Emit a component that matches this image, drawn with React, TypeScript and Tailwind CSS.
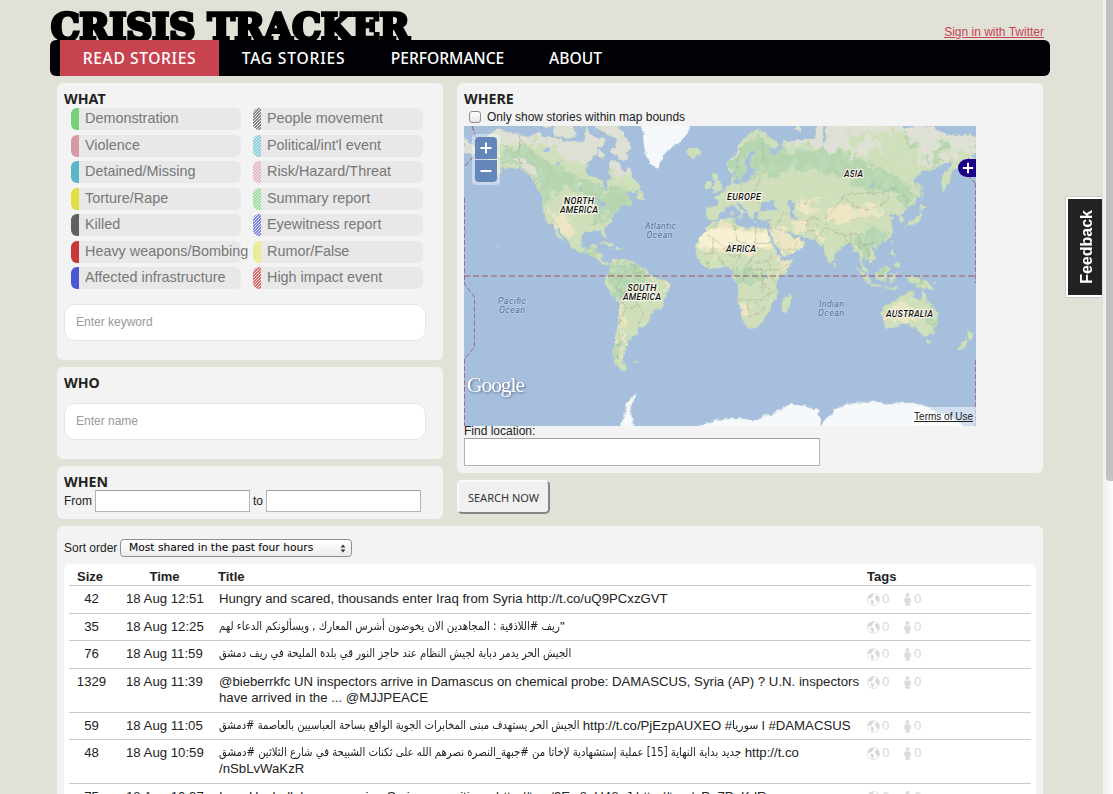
import React from "react";

type Pt = [number, number];

/* Web-mercator projection onto a 512px wide world, equator at y = 149.5 */
const project = ([lon, lat]: Pt): string => {
  const x = ((lon + 180) / 360) * 512;
  const r = (lat * Math.PI) / 180;
  const y = 149.5 - (512 / (2 * Math.PI)) * Math.log(Math.tan(Math.PI / 4 + r / 2));
  return `${x.toFixed(1)},${y.toFixed(1)}`;
};

const shape = (flat: string): string => {
  const n = flat.trim().split(/[\s,]+/).map(Number);
  const pts: Pt[] = [];
  for (let i = 0; i + 1 < n.length; i += 2) pts.push([n[i], n[i + 1]]);
  return "M" + pts.map(project).join("L");
};
const area = (list: string[]): string => list.map((s) => shape(s) + "Z").join("");
const lines = (list: string[]): string => list.map(shape).join("");

const LAND = [
  // North and Central America
  "-168,65.6 -166,68.3 -162,70 -156,71.3 -150,70.6 -141,69.7 -135,69.2 -128,70.3 -124,69.5 -116,69 -108,68 -100,67.8 -95,68.5 -94,71.8 -90,69 -86,69 -81,69 -82,67 -87,66.5 -86,65 -93,62 -94.5,59 -92.5,57 -88,56.7 -82.5,55.2 -82,52.8 -80,51.2 -79,51.5 -79.5,54.6 -77,56 -78,59 -77.5,62.4 -73,62.2 -70,61 -69.5,59 -66,58.8 -64.5,60.2 -62,58 -61,56 -57.5,54.5 -56,52 -59.5,50.2 -66,50.2 -70,47.5 -65,49.2 -64.3,47.5 -61,45.8 -66,43.6 -67,45 -70.3,43.6 -70.7,42 -70,41.7 -74,40.5 -75.7,37 -76,35 -78,33.9 -81.2,31.8 -81.4,30 -80,26.8 -80.6,25.2 -81.8,26.2 -82.8,28 -84,30 -85.5,30 -89.2,30.2 -89.5,29.2 -91.5,29.5 -94.7,29.4 -97.2,27.7 -97.6,24 -97.3,21 -95.8,18.7 -94.3,18.2 -91.5,18.6 -90.4,21 -87,21.5 -87.7,18 -88.6,15.9 -85.8,15.9 -83.2,15 -83.6,11.2 -81.7,9 -79.5,9.5 -77.4,8.6 -78.4,7.9 -80.4,7.4 -82.8,8.1 -83.6,9 -85.7,10 -87.4,12.8 -91.5,14 -94.3,16.2 -96.5,15.7 -101,17.4 -105.3,19.8 -105.4,22 -108.8,25.6 -111.2,28 -113,31.2 -114.8,31.6 -113,28.2 -110,24 -109.5,23 -112,24.7 -114.8,27.5 -115.7,29.8 -117.2,32.8 -118.5,34 -120.6,34.5 -122.5,37.7 -124.3,40.4 -124,44 -124.5,48.2 -122.8,49 -127.5,51 -130.3,54.5 -133.5,57.5 -137,58.7 -140,59.7 -144,60 -148,60.2 -151.5,59.3 -153.5,60.5 -154,58.6 -158,56.5 -163.5,54.8 -161,56 -157.5,58.7 -162,58.8 -164.5,61 -166,61.8 -161,64.3 -166,64.5",
  // Arctic archipelago
  "-117,69.5 -105,68.9 -101,69.8 -105,72.8 -110,73 -117,71.5",
  "-125,72 -120,71.4 -115,73.3 -121,74.3 -125,74",
  "-62,66.5 -66,65 -64.5,63 -68,62.5 -74,64.5 -78,65 -73,67.5 -73,69 -79,70 -88,71.5 -90,73.7 -81,73.7 -75,72.2 -68,70.3",
  "-82,63.5 -86,64 -85,66 -81,64.3", "-100,72 -97,71.5 -96,73.6 -102,73.5", "-116,74.9 -105,75 -106,77 -116,76.5", "-95,74.6 -80,74.6 -80,77 -95,77",
  "-59,47.7 -56,51.5 -53,47 -55.5,46.8", "-84.8,21.9 -80,23.1 -74.3,20.2 -77.6,19.9 -82,22.5", "-74.3,18.4 -72.5,19.9 -68.6,18.6 -71.5,17.8", "-78.2,18.3 -76.3,18.2 -77,17.8", "-128,50.6 -125,50 -123.6,48.5",
  // South America
  "-77.4,8.6 -75.5,10.6 -72,12.2 -71.4,10.9 -68.2,10.9 -62,10.7 -59.8,8.3 -57,6 -51.7,4.4 -50,0.5 -48,-.8 -44,-2.7 -39.5,-3 -35.4,-5.2 -34.9,-8 -38.2,-12.8 -39,-17.5 -41,-22 -45,-23.4 -48.5,-26 -49.4,-29 -52.4,-33.2 -54.8,-34.9 -58,-34 -56.8,-36.5 -57.8,-38.2 -62,-39 -62.3,-40.8 -65,-41 -63.8,-42.7 -65.4,-45 -67.5,-46.2 -65.9,-47.9 -69,-50.5 -68.5,-52.5 -65.2,-54.7 -68.5,-55.5 -73.8,-52 -75.5,-49 -74.2,-44 -73.7,-39.5 -71.7,-33 -71.3,-29 -70.2,-20 -71.6,-17.3 -76.2,-13.7 -79.6,-7.5 -81.3,-5 -80.3,-3.2 -80.6,-.6 -78.8,1.4 -77.2,4",
  "-61,-51.5 -58,-51.4 -59,-52.2",
  // Eurasia
  "-9.3,43 -1.8,43.4 -1.2,46 -4.5,48.2 -1.6,48.8 1.5,50.3 4.5,52.5 8,53.8 8.3,57 10.6,57.7 10,54.5 14,54.1 18.8,54.6 21.2,55.5 21.5,57.4 24.3,57.5 23.5,59.2 29.8,59.9 24,60 21.3,61 22,63.3 25.3,65.2 22,65.8 17.3,62.2 17.3,60.6 18.9,59.8 16.4,57 14.3,55.5 12.8,55.6 11.2,59.2 7.5,58 5.1,60 5.2,62 11,64.5 15,68.2 20,70 26,71.1 31,70.3 41,67.5 39.5,66 34,66.6 37,64 40,64.7 44,66.3 44,68.5 48,67.6 54,68.4 60,68.7 67,68.8 69,72.8 72.5,72.8 72,67.5 74,68.3 75,72.7 80,72.2 80,73.6 87,75.1 98,76.1 104,77.6 113,75.6 112,73.7 120,73 128,73.2 130,71 139,72.2 150,71.5 160,69.8 170,69.8 176,69.8 180,69 180,65 177,64.6 179.5,62.5 174,61.7 170,60 163.5,59.8 162,56.2 160,53 156.7,51 155.8,56.5 162,60.5 164,62.5 156.5,61.6 150,59.4 142,59.2 135.2,54.7 140.5,53.5 140.4,49 135.5,44 132,43.2 129.7,41 127.5,39.5 129.4,37 129,35.2 126.5,34.5 126.5,37.5 124.5,39.8 121.5,39 121.7,40.8 117.8,38.8 122.5,37.2 119.3,35 121.8,31.8 121.7,28.5 118,24.4 113.8,22.2 110.2,20.4 106.8,20.2 105.7,18.9 108.9,15.5 109.2,11.8 106.6,9.5 104.9,8.7 105,10.5 102.3,12.3 100.8,13.4 99.4,10.5 100.5,7 103.4,4.5 104.2,1.3 101.4,2.8 98.4,8 98.7,12 97.7,16.4 94.3,16 94.3,18.8 91.8,22.5 88.5,21.7 86.9,21 82.3,16.6 80.2,15 80,11.5 77.6,8.1 75,12.2 73.2,17 72.7,20.8 70.4,21 69,22.3 67.3,24.7 61.6,25.2 57.3,26.5 51.5,27.8 50,30.2 48,30 50.2,26.5 51.5,24.4 56.2,26.2 56.6,24.3 59.8,22.5 57.7,19 55,17.2 48,14 43.5,12.7 42.7,16.3 39.2,21.2 37.2,24.8 34.9,29.4 34.2,31.3 35.8,35.5 36,36.9 30.5,36.5 27.3,37 26.5,39.5 29,41.1 35,42 41.5,41.5 37.5,44.6 39,47.1 35,46.3 33.5,44.5 32,46.4 30,45.8 28,43.4 28.6,41.3 26,40.8 23,40.4 24,38 22.8,36.5 21,37.8 19.4,41.3 16,43.6 13.5,45.7 12.4,44.5 14,42.4 16,41.8 18.4,40.3 16.8,40.5 16,38 15.6,40.1 12,42 10.3,43.9 7.5,43.8 3.2,43.2 3.2,41.9 .2,40 -.4,38.5 -2.1,36.7 -5.4,36.1 -9,37.1 -9.4,38.8",
  "-180,69 -173,67 -170,66 -173,64.3 -180,65",
  // Africa
  "-5.9,35.8 -2,35.1 3,36.9 10,37.3 10.7,34.5 15.2,32.4 19.8,30.3 21.5,32.8 25,31.7 29,30.9 32.3,31.3 32.6,29.8 35.5,24 37.3,20.8 39.5,15.6 43.2,12 44.5,10.4 51.2,11.9 50.8,9.3 47.8,4.3 42,-1 39.2,-5 40.5,-10.8 40.6,-15 35.5,-20 35.4,-24 32.8,-26 30.5,-30.5 26,-33.8 20,-34.8 18.4,-33.5 16,-28.8 14.5,-22.5 11.9,-17.5 13.7,-11 12.2,-5.5 9,-1 9.6,3.8 6.5,4.3 4.3,6.3 -2,4.8 -7.6,4.3 -12.5,7.4 -15,11 -17.4,14.7 -16.2,19 -17,21.5 -14.5,26.2 -11.5,28.1 -9.6,30 -9,32.5 -6.5,34.3",
  "49.3,-12.2 50.4,-15.8 47.2,-25 44.1,-25 43.4,-22 44.4,-16.5",
  // Islands
  "-5.6,50.1 1.3,51.1 1.6,52.8 -1.5,55 -2,57.6 -5,58.6 -6,56.6 -3.2,54.7 -4.5,53.2 -5,52 -3,51.4", "-10,51.7 -6.3,52.3 -6,54.2 -7.5,55.2 -10,54.2",
  "-24,65.6 -22,64 -18.5,63.4 -13.6,65 -16,66.4 -22,66.3", "8.3,39 9.8,39.2 9.5,41.2 8.2,41", "12.5,38 15.5,38.2 15.1,36.7", "23.5,35.4 26.3,35.2 25,34.9", "32.4,35 34.4,35.6 33.6,34.8", "79.8,8.5 81.8,7 80.5,6",
  "130,31.4 131.8,33.6 135.8,33.6 140.8,35.7 142,39.6 141.3,41.4 139.8,38.8 136.8,37 132.5,35.5 130.8,34", "140,42 143,42.1 145.3,43.4 141.8,45.4", "142,46.5 143.4,49.2 142.5,54.2", "120.1,23 121.6,25.3 120.8,22", "109,19.8 111,20 109.5,18.3",
  "95.4,5.6 98,4.6 103.5,-.8 106,-3 105.8,-5.8 102.5,-4.2 99,.2", "105.5,-6.3 110.8,-6.4 114.5,-7.7 114.3,-8.6 108,-7.8", "109,1.6 111.5,2.6 116.8,7 119.2,5.2 117.8,1 116.2,-3.7 110.3,-2.9", "119.4,-5.5 120,.7 125,1.5 120.4,.3 123.4,-1 121.5,-2 122.8,-4.6 120.9,-3 120.4,-5.5", "120.4,17.8 122.3,18.4 122,16 124,12.8 120.2,14.6", "122,7 125.5,9.8 126.4,7 125.4,5.7", "116,-8.4 119,-8.3 125,-8.5 124,-10 117,-9",
  "131,-1 134,-.8 137.8,-1.5 144.5,-3.9 147.5,-6.3 150.8,-10.5 146,-8.5 142.5,-9.3 138.5,-8.2 137.6,-5.2 132.9,-4", "149,-5.7 152.2,-4.3 151,-6",
  // Australia and New Zealand
  "114,-22 113.5,-25.5 115.7,-31.8 115.1,-34.3 118,-35 123.8,-33.8 131,-31.5 135.5,-34.8 137.8,-33 138.3,-35.5 140.5,-38 146.3,-39 150,-37.3 153,-31.5 153.4,-26 149,-20.5 146,-18.6 145.2,-15 142.5,-10.8 141.5,-13.8 140.5,-17.5 136,-15 136.7,-12.2 132.5,-11.4 130,-14.5 127.5,-14.1 122.2,-18 117,-20.7",
  "144.7,-40.8 148.3,-41 147,-43.6 145.5,-42.8", "172.8,-34.6 175.5,-36.8 178.3,-37.7 176,-41.3 173.9,-39.2 174.7,-37.2", "172.8,-40.6 174.2,-41.8 171,-45.6 168.3,-46.5 166.6,-45.9 170.5,-43",
  "53,71 57,70.7 56,73.5 68,77 60,76", "-155.8,20.2 -155,19.5 -155.8,19",
];

const ICE = [
  "-73,78.3 -68,76 -60,76 -56,73 -54,70.5 -53.5,67 -52,64.2 -48.5,61.3 -43.5,60 -41,63.2 -37,65.8 -27,68.3 -22,70.5 -20,74 -18,78 -30,80 -60,80",
  "-180,-79 -160,-78.5 -155,-77.6 -147,-77 -135,-76 -115,-76 -102,-75.5 -98,-74.6 -88,-75 -77,-75 -74,-73 -70,-72.5 -67,-69 -65,-66 -59,-63.4 -60,-65 -63,-67.5 -62,-70 -61,-72 -60,-75 -48,-78 -35,-78 -25,-75.4 -22,-74 -17,-72.4 -8,-71.3 0,-70.6 13,-70.4 25,-70.8 32,-69.5 36,-69.8 40,-68.6 50,-66.6 57,-66.9 62,-67.7 69,-68.4 71,-72 76,-70 82,-68 88,-66.8 100,-66.2 110,-66 120,-66.8 125,-66.2 130,-66.4 137,-66.4 145,-67.2 150,-68.6 158,-69.4 166,-71 172,-72.4 170,-76 180,-79 180,-82 -180,-82",
];

const FOREST = [
  "-160,68 -150,66 -142,67 -130,66 -120,62 -108,59 -95,56 -84,52 -78,50 -70,52 -60,52 -60,46 -70,44 -78,42 -80,36 -84,33 -92,36 -88,42 -96,48 -110,54 -118,50 -122,42 -124,40 -127,50 -134,57 -150,62",
  "-78,8 -60,8 -50,1 -47,-5 -55,-12 -66,-14 -75,-13 -80,-2", "-74,-42 -72,-37 -71,-46 -73,-52 -75,-50", "-95,18 -86,21 -88,15 -82,8 -78,9 -84,11 -92,15",
  "9,4 16,5 28,4 30,-3 22,-7 12,-4", "-13,9 -8,8 -3,6 -8,4", "6,60 14,66 24,69 42,66 60,66 80,66 92,64 112,60 130,54 138,49 132,44 122,50 108,51 92,55 80,58 60,60 40,59 28,57 14,56",
  "96,27 100,20 108,22 118,27 112,31 103,31", "93,24 99,18 102,12 107,13 104,19 110,23", "96,5 104,-3 105,-6 99,0", "110,2 117,6 117,-3 110,-2", "131,-1 148,-7 140,-7",
  "147,-19 152,-26 152,-34 146,-38 149,-33 148,-26", "141,60 150,66 160,68 157,63", "128,69 134,66 140,68 134,71",
];

const SAND = [
  "-17,28 -8,31 0,34 10,33 20,31 34,31 37,22 37,17 30,16 16,15 0,16 -17,16",
  "35,31 42,33 49,30 56,25 60,22 52,16 43,13 38,24", "50,35 60,36 62,26 54,27", "53,45 66,46 70,40 58,38",
  "74,39 82,42 94,43 106,44 116,45 108,38 96,35 82,34", "-118,40 -112,42 -106,36 -103,30 -104,24 -110,28 -116,33",
  "118,-21 128,-19 138,-22 140,-28 134,-31 124,-30 117,-28", "13,-17 18,-20 20,-28 17,-30", "-71,-18 -68,-22 -68,-30 -70,-36 -68,-48 -70,-48 -72,-34", "43,12 51,12 48,5 42,2", "68,30 72,28 71,24 68,25", "-43,-5 -37,-5 -40,-11 -44,-12",
];

const TUNDRA = [
  "-168,70 -156,72 -130,71 -95,72 -60,75 -60,58 -66,57 -76,57 -80,66 -94,60 -105,63 -120,67 -140,68.6 -160,67", "-148,62 -138,60 -130,55 -128,59 -140,64", "-125,77 -60,77 -60,62 -85,62 -125,70",
  "44,69 64,67 76,66 88,66 92,62 98,67 110,70 128,71 145,66 158,68 165,64 180,67 180,78 60,78", "7,59 10,63 18,69 14,68 5,62", "165,60 180,65 170,62 163,57", "-180,62 -166,62 -166,70 -180,70",
  "88,70 108,70 112,66 104,63 96,64", "138,62 150,62 152,68 140,70", "152,62 164,66 160,60",
];

const WATER = [
  "47,46.5 51,47 53,45 51,41 54,37 51,36.6 49.5,38 49,42", "28,43 33,46 38,44.5 41.5,42 36,42 31,41.2", "-92,46.8 -88,48.6 -84.5,46.5", "-87.8,42 -86,45.8 -84.8,46 -86.5,42", "-84,46 -80,45.5 -82,43.3 -83.5,44", "-83,41.6 -79,42.8 -81,42.5", "-79.5,43.3 -76.3,44", "103.8,51.5 109.5,55.5 108,53", "32,0 34.2,0 33.5,-2.5 32,-2.5", "58.5,45 61,46 60,44", "-116,61.5 -109,62.8 -114,61", "-125,66 -119,66.5 -121,65", "-98,53.8 -96.5,51 -98,51",
];

const BORDERS = [
  "-141,69.6 -141,60", "-130,55 -130,57 -137,59 -141,60", "-8,30 -2,35", "-8.5,27.5 3,19.5 12,23.5 9.5,37", "12,23.5 15,23 24,19.5 25,22 25,31.5", "25,22 37,22", "-12,15 -5,15.5 -5,25", "3,19 4,15 14,13 15,23", "-4,15 1,11 3,6", "-8,10 -8,5", "14,13 10,7 9,4.6", "16,4 22,11 24,19", "24,9 34,10 36,15", "34,10 36,4 42,4 48,8", "36,4 30,4 30,-5 30,-12", "30,4 16,4 18,0 16,-5 12,-6", "12,-17 22,-17 25,-18 30,-16 35,-12 40,-11", "20,-18 20,-28 27,-26 32,-23", "34,0 40,-5", "30,-5 35,-10 34,-16", "25,-18 29,-22 32,-22",
  "-72,12 -72,7 -67,6 -67,1 -70,-4 -75,0 -79,1", "-70,-4 -73,-9 -70,-11 -69,-17", "-69,-12 -60,-14 -58,-20 -63,-22 -67,-22 -69,-18", "-67,-23 -70,-30 -71,-40 -72,-50", "-58,-20 -55,-24 -54,-27 -58,-33", "-60,8 -60,1 -52,4", "34,31 39,32 42,37 44,40 48,39", "39,32 46,29 48,30", "44,17 52,19 55,23", "61,25 61,36 54,37", "61,30 66,30 71,36 66,38 61,36", "67,25 70,28 75,32 74,37 80,42 87,49 98,50 116,50 120,53 127,50 131,48 131,43", "88,48 96,43 105,42 112,44 119,47 116,50", "75,32 80,30 88,27 92,28 97,28", "88,27 88,22", "92,28 92,22", "97,28 98,24 101,21 108,22", "98,24 98,17", "101,21 104,18 105,11", "141,-2.5 141,-9", "28,58 28,55 24,51 24,48 28,45", "15,54 15,50 10,47 7,49 3,51", "24,48 17,48 13,46", "30,69 30,62", "12,60 14,66 22,69",
];

const equator = 149.5;

const mapLabels: { x: number; y: number; text: string; width: number; sea?: boolean }[] = [
  { x: 115, y: 77.5, text: "NORTH", width: 30 },
  { x: 115, y: 86.5, text: "AMERICA", width: 38 },
  { x: 178, y: 164.5, text: "SOUTH", width: 29 },
  { x: 178, y: 173.5, text: "AMERICA", width: 38 },
  { x: 280, y: 73.5, text: "EUROPE", width: 34 },
  { x: 277, y: 126, text: "AFRICA", width: 30 },
  { x: 389.5, y: 51, text: "ASIA", width: 19 },
  { x: 445.5, y: 190.5, text: "AUSTRALIA", width: 47 },
  { x: 196.5, y: 103, text: "Atlantic", width: 31, sea: true },
  { x: 195.5, y: 111.5, text: "Ocean", width: 26, sea: true },
  { x: 48, y: 178, text: "Pacific", width: 28, sea: true },
  { x: 48, y: 186.5, text: "Ocean", width: 26, sea: true },
  { x: 367.5, y: 181, text: "Indian", width: 25, sea: true },
  { x: 367, y: 189.5, text: "Ocean", width: 26, sea: true },
];

function WorldMap() {
  const land = area(LAND);
  return (
    <svg width="512" height="300" viewBox="0 0 512 300" className="block">
      <defs>
        <clipPath id="land">
          <path d={land} />
        </clipPath>
        <filter id="rough" x="0" y="0" width="512" height="300" filterUnits="userSpaceOnUse">
          <feTurbulence type="fractalNoise" baseFrequency="0.22" numOctaves="3" seed="4" />
          <feDisplacementMap in="SourceGraphic" scale="4.5" xChannelSelector="R" yChannelSelector="G" />
        </filter>
        <filter id="patchy" x="0" y="0" width="512" height="300" filterUnits="userSpaceOnUse">
          <feTurbulence type="fractalNoise" baseFrequency="0.09" numOctaves="4" seed="9" />
          <feDisplacementMap in="SourceGraphic" scale="26" xChannelSelector="R" yChannelSelector="G" />
          <feGaussianBlur stdDeviation="0.7" />
        </filter>
        <filter id="mottle" x="0" y="0" width="512" height="300" filterUnits="userSpaceOnUse">
          <feTurbulence type="fractalNoise" baseFrequency="0.11" numOctaves="4" seed="21" />
          <feColorMatrix values="0 0 0 0 0.62  0 0 0 0 0.78  0 0 0 0 0.6  3 0 0 0 -1.3" />
        </filter>
      </defs>
      <rect width="512" height="300" fill="#a5bfdd" />
      <g filter="url(#rough)">
        <path d={land} fill="#d0dfb9" stroke="#c3d8bd" strokeWidth="0.6" />
        <g clipPath="url(#land)">
          <g filter="url(#patchy)">
            <path d={area(FOREST)} fill="#b5d5af" />
            <path d={area(SAND)} fill="#f0e6c3" />
            <path d={area(TUNDRA)} fill="#e0e0d7" />
          </g>
          <rect width="512" height="300" filter="url(#mottle)" opacity="0.4" />
          <path d={area(["-15,28 0,32 20,29 34,29 35,20 10,18 -15,20"])} fill="#f7f0d3" />
          <path d={area(WATER)} fill="#a5bfdd" />
          <path d={lines(BORDERS)} fill="none" stroke="#9a9a85" strokeWidth="0.6" opacity="0.7" />
        </g>
        <path d={area(ICE)} fill="#f5f9fc" stroke="#dde6e6" strokeWidth="0.7" />
      </g>
      <g fill="none" stroke="#a05a70">
        <path d={`M0 ${equator + 0.5}H512`} strokeWidth="1.5" strokeDasharray="6 3" opacity="0.7" />
        <path d="M8 0L16 23L0 41" strokeDasharray="5 2" />
        <path d="M511 57L497 42L505 32" strokeDasharray="4 2" />
        <path d="M0.5 72V158L10.5 171V221L0.5 233V300" strokeDasharray="5 2" opacity="0.8" />
        <path d="M511.5 57V157M511.5 234V300" strokeDasharray="5 2" opacity="0.7" />
      </g>
      <g textAnchor="middle" fontFamily="Roboto, sans-serif" fontStyle="italic" paintOrder="stroke" strokeLinejoin="round">
        {mapLabels.map((l) => (
          <text
            key={`${l.x}-${l.y}`}
            x={l.x}
            y={l.y}
            textLength={l.width}
            fontSize={l.sea ? 8.8 : 9}
            fontWeight={l.sea ? 400 : 500}
            fill={l.sea ? "#4d6d99" : "#111"}
            stroke={l.sea ? "#bdd0e6" : "#f3f3e6"}
            strokeWidth={l.sea ? 1.5 : 2.5}
          >
            {l.text}
          </text>
        ))}
      </g>
      <text
        x="3"
        y="266"
        textLength="58"
        fontFamily="'Liberation Serif', serif"
        fontSize="21.5"
        fill="#fff"
        className="drop-shadow-[1px_1px_1px_#5f6f86]"
      >
        Google
      </text>
    </svg>
  );
}

const navItems = [
  { label: "READ STORIES", box: "w-[159px] bg-[#c74350] tracking-[0.6px]" },
  { label: "TAG STORIES", box: "w-[149px] tracking-[0.8px]" },
  { label: "PERFORMANCE", box: "w-[159px]" },
  { label: "ABOUT", box: "w-[97px]" },
];

const solidTags = [
  { label: "Demonstration", swatch: "bg-[#75d175]" },
  { label: "Violence", swatch: "bg-[#d79aa5]" },
  { label: "Detained/Missing", swatch: "bg-[#5cb8c9]" },
  { label: "Torture/Rape", swatch: "bg-[#dfe040]" },
  { label: "Killed", swatch: "bg-[#606060]" },
  { label: "Heavy weapons/Bombing", swatch: "bg-[#c93939]" },
  { label: "Affected infrastructure", swatch: "bg-[#4a57d2]" },
];
const stripedTags = [
  { label: "People movement", swatch: "text-[#858585]" },
  { label: "Political/int'l event", swatch: "text-[#84cfdd]" },
  { label: "Risk/Hazard/Threat", swatch: "text-[#e8b3bd]" },
  { label: "Summary report", swatch: "text-[#95e095]" },
  { label: "Eyewitness report", swatch: "text-[#7b84e0]" },
  { label: "Rumor/False", swatch: "text-[#ebeb70]" },
  { label: "High impact event", swatch: "text-[#dd6666]" },
];

function TagColumn({ tags, striped }: { tags: { label: string; swatch: string }[]; striped?: boolean }) {
  return (
    <ul className="flex w-[170px] flex-col gap-[4.5px]">
      {tags.map((t) => (
        <li key={t.label} className="flex h-[22px] items-center rounded-md bg-[#e8e8e8] text-[14.4px] leading-[20px] whitespace-nowrap">
          <span
            className={`h-[22px] w-2 shrink-0 rounded-l-md ${t.swatch} ${
              striped
                ? "bg-[repeating-linear-gradient(135deg,currentColor_0px,currentColor_1.4px,#ececec_1.4px,#ececec_2.1px)]"
                : ""
            }`}
          />
          <span className="pb-[2px] pl-[6px] text-[#777]">{t.label}</span>
        </li>
      ))}
    </ul>
  );
}

function Heading({ children }: { children: React.ReactNode }) {
  return <h2 className="font-['Noto_Sans'] text-[14.2px] leading-[18px] font-bold text-[#222]">{children}</h2>;
}

function GlobeIcon() {
  return (
    <svg width="13" height="13" viewBox="0 0 13 13" className="mt-px shrink-0">
      <circle cx="6.5" cy="6.5" r="6" fill="#fff" stroke="#e0e0e0" />
      <path d="M1 3.8L3 1.6L6 .8L6.8 2L5.6 3.2L5.2 4.6L4 5.6L2.8 5.4L1.4 6.2Z" fill="#d8d8d8" />
      <path d="M3.6 6.6L5.6 6.8L7.2 8.2L6.4 10.2L5.6 12L4.4 11.6L4.4 9.4L3.4 8Z" fill="#d8d8d8" />
      <path d="M8.4 3L10.6 2.4L12.2 5L12 8L10.8 9.8L10 8L8.6 6.4L8 4.6Z" fill="#d8d8d8" />
    </svg>
  );
}

function PersonIcon() {
  return (
    <svg width="7" height="13" viewBox="0 0 7 13" className="mt-px shrink-0">
      <circle cx="3.5" cy="2" r="2" fill="#dcdcdc" />
      <path d="M1.5 4.5H5.5Q6.8 4.5 6.8 6V9H5.8V12.8H1.4V9H.3V6Q.3 4.5 1.5 4.5Z" fill="#dcdcdc" />
    </svg>
  );
}

/* Condensed right-to-left run set inside a left-to-right line */
function Arabic({ width, scale, children }: { width: string; scale: string; children: React.ReactNode }) {
  return (
    <bdi dir="ltr" className={`inline-block h-4 align-top leading-[14px] ${width}`}>
      <bdi dir="rtl" className={`inline-block origin-left font-['DejaVu_Sans'] text-[11.5px] leading-[14px] whitespace-nowrap ${scale}`}>
        {children}
      </bdi>
    </bdi>
  );
}

const stories: { size: string; time: string; height: string; title: React.ReactNode }[] = [
  { size: "42", time: "18 Aug 12:51", height: "h-[28px]", title: "Hungry and scared, thousands enter Iraq from Syria http://t.co/uQ9PCxzGVT" },
  {
    size: "35", time: "18 Aug 12:25", height: "h-[27px]",
    title: <><Arabic width="w-[341px]" scale="scale-x-[0.888]">ريف #اللاذقية : المجاهدين الان يخوضون أشرس المعارك , ويسألونكم الدعاء لهم</Arabic>"</>,
  },
  {
    size: "76", time: "18 Aug 11:59", height: "h-[28px]",
    title: <Arabic width="w-[352px]" scale="scale-x-[0.873]">الجيش الحر يدمر دبابة لجيش النظام عند حاجز النور قي بلدة المليحة في ريف دمشق</Arabic>,
  },
  {
    size: "1329", time: "18 Aug 11:39", height: "h-[44px]",
    title: <>@bieberrkfc UN inspectors arrive in Damascus on chemical probe: DAMASCUS, Syria (AP) ? U.N. inspectors<br />have arrived in the ... @MJJPEACE</>,
  },
  {
    size: "59", time: "18 Aug 11:05", height: "h-[27px]",
    title: <><Arabic width="w-[360px]" scale="scale-x-[0.87]">الجيش الحر يستهدف مبنى المخابرات الجوية الواقع بساحة العباسيين بالعاصمة #دمشق</Arabic> http://t.co/PjEzpAUXEO #<Arabic width="w-[26px]" scale="scale-x-[0.95]">سوريا</Arabic> l #DAMACSUS</>,
  },
  {
    size: "48", time: "18 Aug 10:59", height: "h-[44px]",
    title: <><Arabic width="w-[522px]" scale="scale-x-[0.881]">جديد بداية النهاية [15] عملية إستشهادية لإخاتا من #جبهة_النصرة نصرهم الله على ثكنات الشبيحة في شارع الثلاثين #دمشق</Arabic> http://t.co<br />/nSbLvWaKzR</>,
  },
  { size: "75", time: "18 Aug 10:37", height: "h-[28px]", title: "Iran, Hezbollah now running Syria; opposition - http://t.co/9Ew8eU48nJ http://t.co/aPu7PoKdRu" },
];

export default function App() {
  return (
    <div className="flex h-[794px] w-[1113px] overflow-hidden bg-[#e1e1d8] font-['Liberation_Sans',Arial,sans-serif] text-[#222]">
      <div className="flex w-[1103px] shrink-0 flex-col pl-[50px]">
        <header className="flex h-10 w-[1000px] shrink-0 items-end justify-between">
          <h1 className="h-[30px] w-[365px] origin-left scale-x-[0.947] pl-px font-['DejaVu_Serif'] text-[38px] leading-[34px] font-bold whitespace-nowrap text-black [-webkit-text-stroke:3.6px_black]">
            CRISIS TRACKER
          </h1>
          <a className="pr-[6px] pb-[1px] text-[12px] leading-[14px] whitespace-nowrap text-[#c74350] underline">Sign in with Twitter</a>
        </header>
        <nav className="relative flex h-9 w-[1000px] shrink-0 rounded-md bg-[#000205] pl-[10px] font-['Noto_Sans'] text-[15.6px] font-medium text-white">
          {navItems.map((n) => (
            <a key={n.label} className={`flex items-center justify-center pt-[2px] whitespace-nowrap ${n.box}`}>
              {n.label}
            </a>
          ))}
        </nav>

        <main className="flex w-[1000px] flex-col gap-[7px] px-[7px] pt-[7px]">
          <div className="flex gap-[14px]">
            <div className="flex w-[386px] flex-col gap-[7px]">
              <section className="h-[277px] rounded-md bg-[#f3f3f3] pt-[7px] pl-[7px]">
                <Heading>WHAT</Heading>
                <div className="flex gap-3 pl-[7px]">
                  <TagColumn tags={solidTags} />
                  <TagColumn tags={stripedTags} striped />
                </div>
                <input placeholder="Enter keyword" className="mt-[15px] block h-[37px] w-[362px] rounded-[11px] border border-[#e6e6e6] bg-white px-[11px] pb-[2px] text-[12px] outline-none placeholder:text-[#999]" />
              </section>
              <section className="h-[92px] rounded-md bg-[#f3f3f3] pt-[7px] pl-[7px]">
                <Heading>WHO</Heading>
                <input placeholder="Enter name" className="mt-[11px] block h-[37px] w-[362px] rounded-[11px] border border-[#e6e6e6] bg-white px-[11px] pb-[2px] text-[12px] outline-none placeholder:text-[#999]" />
              </section>
              <section className="h-[53px] rounded-md bg-[#f3f3f3] pt-[7px] pl-[7px]">
                <Heading>WHEN</Heading>
                <div className="-mt-px flex items-center text-[12px]">
                  <label className="w-[31px]">From</label>
                  <input className="h-[22px] w-[155px] border border-[#b5b5b5] border-t-[#a0a0a0] bg-white outline-none" />
                  <label className="w-4 text-center">to</label>
                  <input className="h-[22px] w-[155px] border border-[#b5b5b5] border-t-[#a0a0a0] bg-white outline-none" />
                </div>
              </section>
            </div>

            <div className="flex w-[586px] flex-col gap-[7px]">
              <section className="h-[390px] rounded-md bg-[#f3f3f3] pt-[7px] pl-[7px]">
                <Heading>WHERE</Heading>
                <label className="flex h-[18px] items-center gap-[6px] pl-[5px] text-[12px] whitespace-nowrap">
                  <span className="h-3 w-3 rounded-[3px] border border-[#8d8d8d] bg-gradient-to-b from-white to-[#e6e6e6]" />
                  Only show stories within map bounds
                </label>
                <div className="relative h-[300px] w-[512px] overflow-hidden">
                  <WorldMap />
                  <div className="absolute top-2 left-2 flex w-7 flex-col gap-px rounded bg-white/40 p-[3px]">
                    <button className="flex h-[22px] items-center justify-center rounded-t bg-[#6486b8]">
                      <svg width="12" height="12"><path d="M6 .5V11.5M.5 6H11.5" stroke="#fff" strokeWidth="2" /></svg>
                    </button>
                    <button className="flex h-[22px] items-center justify-center rounded-b bg-[#6486b8]">
                      <svg width="12" height="12"><path d="M.5 6H11.5" stroke="#fff" strokeWidth="2" /></svg>
                    </button>
                  </div>
                  <button className="absolute top-[33px] right-0 flex h-[18px] w-[18px] items-center justify-center rounded-l-[9px] bg-[#1e008b] pl-px">
                    <svg width="12" height="12"><path d="M6 .8V11.2M.8 6H11.2" stroke="#fff" strokeWidth="2" /></svg>
                  </button>
                  <div className="absolute right-0 bottom-0 flex h-[19px] w-[64px] items-center justify-end bg-white/50 pr-[3px] text-[10px] whitespace-nowrap underline">
                    Terms of Use
                  </div>
                </div>
                <div className="h-3 text-[12px] leading-[11px]">Find location:</div>
                <input className="block h-[28px] w-[356px] border border-[#b5b5b5] border-t-[#a0a0a0] bg-white outline-none" />
              </section>
              <button className="h-[34px] w-[93px] rounded-[5px] border-2 border-t-[#f9f9f9] border-r-[#858585] border-b-[#858585] border-l-[#f9f9f9] bg-[#f0f0f0] pt-[2px] font-['Noto_Sans'] text-[11px] whitespace-nowrap text-[#333]">
                SEARCH NOW
              </button>
            </div>
          </div>

          <section className="h-[400px] rounded-t-md bg-[#f3f3f3] px-[7px] pt-[13px]">
            <div className="flex h-[18px] items-center text-[12px]">
              <label className="w-[56px] whitespace-nowrap">Sort order</label>
              <div className="flex h-[18px] w-[232px] items-center justify-between rounded-[4px] border border-[#8f8f8f] bg-gradient-to-b from-white to-[#ececec] pr-[5px] pl-2 font-['DejaVu_Sans'] text-[10.7px] whitespace-nowrap text-black">
                Most shared in the past four hours
                <svg width="6" height="9"><path d="M3 .5L5.4 3.4H.6ZM3 8.5L5.4 5.6H.6Z" fill="#333" /></svg>
              </div>
            </div>
            <div className="mt-[7px] h-[370px] rounded-t-md bg-white px-[5px] text-[13.2px] leading-[16px] text-[#222]">
              <div className="flex h-[22px] items-center border-b border-[#c9c9c9] pt-[4px] text-[13px] font-bold">
                <span className="w-[42px] text-center">Size</span>
                <span className="w-[107px] text-center">Time</span>
                <span className="w-[649px]">Title</span>
                <span>Tags</span>
              </div>
              {stories.map((s) => (
                <div key={s.size} className={`flex items-start border-b border-[#c9c9c9] pt-[5px] whitespace-nowrap ${s.height}`}>
                  <span className="w-[45px] text-center">{s.size}</span>
                  <span className="w-[105px] pl-3">{s.time}</span>
                  <span className="w-[648px]">{s.title}</span>
                  <span className="flex h-4 items-center text-[#d8d8d8]">
                    <GlobeIcon />
                    <span className="w-[24px] pl-[2px]">0</span>
                    <PersonIcon />
                    <span className="pl-[3px]">0</span>
                  </span>
                </div>
              ))}
            </div>
          </section>
        </main>
      </div>

      <div className="h-full w-[10px] shrink-0 bg-gradient-to-r from-[#ededed] to-[#fdfdfd] pl-[3px]">
        <div className="h-[481px] rounded-bl-[4px] bg-[#c1c1c1]" />
      </div>

      <div className="absolute top-[196px] left-[1065px] flex h-[102px] w-[37px] items-center justify-center border border-r-0 border-[#ccc] bg-white py-[2px] pl-[2px]">
        <div className="flex h-full w-full items-center justify-center bg-[#222] pl-[3px]">
          <span className="rotate-180 text-[16px] font-bold text-white [writing-mode:vertical-rl]">Feedback</span>
        </div>
      </div>
    </div>
  );
}
